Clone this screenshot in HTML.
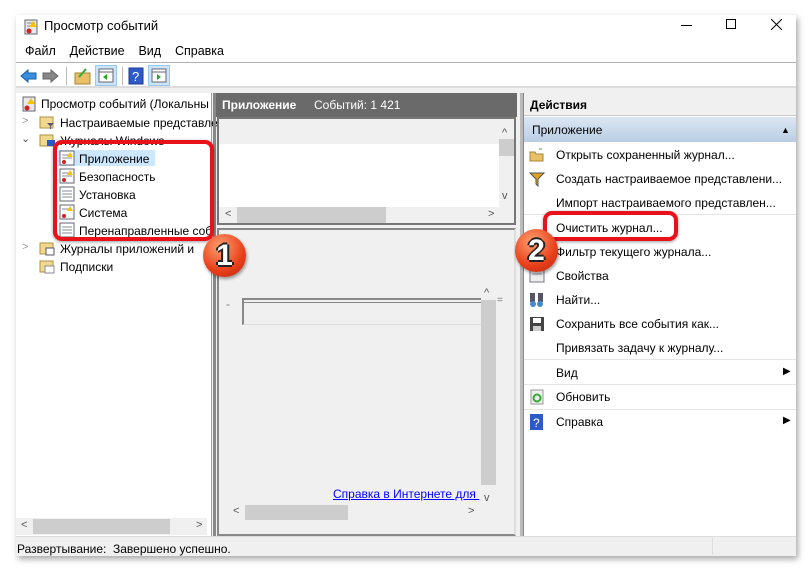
<!DOCTYPE html>
<html><head><meta charset="utf-8">
<style>
*{margin:0;padding:0;box-sizing:border-box}
body{width:812px;height:571px;background:#fff;font-family:"Liberation Sans",sans-serif;font-size:12px;color:#000;position:relative;overflow:hidden}
.a{position:absolute}
.win{left:16px;top:15px;width:780px;height:541px;background:#f0f0f0;box-shadow:2px 3px 6px rgba(0,0,0,.35)}
.t{position:absolute;white-space:nowrap}
.ic{position:absolute;width:16px;height:16px}
.sb{background:#cdcdcd}
.arr{position:absolute;font-size:11px;color:#555}
</style></head><body>
<div class="a win"></div>
<!-- title -->
<div class="a" style="left:16px;top:15px;width:780px;height:47px;background:#fff"></div>
<svg class="a" style="left:23px;top:19px" width="16" height="16"><rect x="2" y="1" width="12" height="14" fill="#e8e8e8" stroke="#667"/><line x1="4" y1="4" x2="12" y2="4" stroke="#889"/><line x1="4" y1="7" x2="12" y2="7" stroke="#889"/><polygon points="10,2 14,8 6,8" fill="#f5c400"/><circle cx="6" cy="12" r="2.5" fill="#d02020"/></svg>
<div class="t" style="left:44px;top:18px;font-size:13px">Просмотр событий</div>
<div class="a" style="left:681px;top:25px;width:11px;height:1px;background:#000"></div>
<div class="a" style="left:726px;top:19px;width:10px;height:10px;border:1px solid #000"></div>
<svg class="a" style="left:771px;top:19px" width="11" height="11"><path d="M0 0L11 11M11 0L0 11" stroke="#000"/></svg>
<div class="t" style="left:25px;top:44px;font-size:12.5px">Файл&nbsp;&nbsp;&nbsp;&nbsp;Действие&nbsp;&nbsp;&nbsp;&nbsp;Вид&nbsp;&nbsp;&nbsp;&nbsp;Справка</div>
<div class="a" style="left:16px;top:62px;width:780px;height:1px;background:#b0b0b0"></div>
<div class="a" style="left:16px;top:63px;width:780px;height:23px;background:#fff"></div>
<div class="a" style="left:16px;top:86px;width:780px;height:2px;background:#ddd"></div>
<!-- toolbar -->
<svg class="a" style="left:20px;top:68px" width="40" height="16"><path d="M1 8L8 2V5H16V11H8V14Z" fill="#3a8ee0" stroke="#1a5fa8"/><path d="M38 8L31 2V5H23V11H31V14Z" fill="#888" stroke="#666"/></svg>
<div class="a" style="left:66px;top:67px;width:1px;height:18px;background:#bbb"></div>
<svg class="a" style="left:74px;top:67px" width="18" height="18"><rect x="1" y="6" width="15" height="11" fill="#e8c068" stroke="#a88430"/><path d="M5 10L12 2" stroke="#3a3" stroke-width="2"/></svg>
<div class="a" style="left:95px;top:65px;width:22px;height:21px;background:#cce4f7;border:1px solid #99c9ef"></div>
<svg class="a" style="left:98px;top:68px" width="16" height="15"><rect x="1" y="1" width="14" height="13" fill="#fff" stroke="#667"/><line x1="1" y1="4" x2="15" y2="4" stroke="#667"/><polygon points="9,6 5,9 9,12" fill="#2a2"/></svg>
<div class="a" style="left:122px;top:67px;width:1px;height:18px;background:#bbb"></div>
<svg class="a" style="left:128px;top:67px" width="16" height="18"><rect x="1" y="1" width="14" height="16" fill="#2e59c8" stroke="#1a3a90"/><text x="4" y="14" font-size="13" fill="#fff" font-family="Liberation Sans">?</text></svg>
<div class="a" style="left:148px;top:65px;width:22px;height:21px;background:#cce4f7;border:1px solid #99c9ef"></div>
<svg class="a" style="left:151px;top:68px" width="16" height="15"><rect x="1" y="1" width="14" height="13" fill="#fff" stroke="#667"/><line x1="1" y1="4" x2="15" y2="4" stroke="#667"/><polygon points="6,6 10,9 6,12" fill="#2a2"/></svg>

<!-- left pane -->
<div class="a" style="left:16px;top:93px;width:196px;height:443px;background:#fff;border-right:1px solid #a0a0a0"></div>
<div class="a" style="left:205px;top:93px;width:4px;height:443px;background:#fff"></div>
<svg class="ic" style="left:21px;top:96px"><rect x="2" y="1" width="12" height="14" fill="#e8e8e8" stroke="#667"/><polygon points="10,2 14,8 6,8" fill="#f5c400"/><circle cx="6" cy="12" r="2.5" fill="#d02020"/></svg>
<div class="t" style="left:41px;top:97px">Просмотр событий (Локальны</div>
<div class="t" style="left:22px;top:115px;color:#999;font-size:11px">&gt;</div>
<svg class="ic" style="left:39px;top:114px"><rect x="1" y="3" width="13" height="11" fill="#f0d890" stroke="#b09040"/><path d="M8 9H15L12 12V15H11V12Z" fill="#557"/></svg>
<div class="t" style="left:60px;top:116px">Настраиваемые представле</div>
<div class="t" style="left:21px;top:132px;color:#555;font-size:11px">⌄</div>
<svg class="ic" style="left:39px;top:132px"><rect x="1" y="3" width="13" height="11" fill="#f0d890" stroke="#b09040"/><rect x="8" y="8" width="8" height="6" fill="#2a5ac8"/></svg>
<div class="t" style="left:60px;top:134px">Журналы Windows</div>
<div class="a" style="left:58px;top:150px;width:97px;height:16px;background:#cce8ff"></div>
<svg class="ic" style="left:59px;top:150px"><rect x="1" y="1" width="14" height="14" fill="#fff" stroke="#667"/><line x1="3" y1="5" x2="13" y2="5" stroke="#889"/><line x1="3" y1="8" x2="13" y2="8" stroke="#889"/><polygon points="11,2 14,7 8,7" fill="#f5c400"/><circle cx="5" cy="12" r="2" fill="#d02020"/></svg>
<div class="t" style="left:79px;top:152px">Приложение</div>
<svg class="ic" style="left:59px;top:168px"><rect x="1" y="1" width="14" height="14" fill="#fff" stroke="#667"/><line x1="3" y1="5" x2="13" y2="5" stroke="#889"/><line x1="3" y1="8" x2="13" y2="8" stroke="#889"/><polygon points="11,2 14,7 8,7" fill="#f5c400"/><circle cx="5" cy="12" r="2" fill="#d02020"/></svg>
<div class="t" style="left:79px;top:170px">Безопасность</div>
<svg class="ic" style="left:59px;top:186px"><rect x="1" y="1" width="14" height="14" fill="#fff" stroke="#667"/><line x1="3" y1="5" x2="13" y2="5" stroke="#889"/><line x1="3" y1="8" x2="13" y2="8" stroke="#889"/><line x1="3" y1="11" x2="13" y2="11" stroke="#889"/></svg>
<div class="t" style="left:79px;top:188px">Установка</div>
<svg class="ic" style="left:59px;top:204px"><rect x="1" y="1" width="14" height="14" fill="#fff" stroke="#667"/><line x1="3" y1="5" x2="13" y2="5" stroke="#889"/><polygon points="11,2 14,7 8,7" fill="#f5c400"/><circle cx="5" cy="12" r="2" fill="#d02020"/></svg>
<div class="t" style="left:79px;top:206px">Система</div>
<svg class="ic" style="left:59px;top:222px"><rect x="1" y="1" width="14" height="14" fill="#fff" stroke="#667"/><line x1="3" y1="5" x2="13" y2="5" stroke="#889"/><line x1="3" y1="8" x2="13" y2="8" stroke="#889"/><line x1="3" y1="11" x2="13" y2="11" stroke="#889"/></svg>
<div class="t" style="left:79px;top:224px">Перенаправленные соб</div>
<div class="t" style="left:22px;top:241px;color:#999;font-size:11px">&gt;</div>
<svg class="ic" style="left:39px;top:240px"><rect x="1" y="3" width="13" height="11" fill="#f0d890" stroke="#b09040"/><rect x="7" y="8" width="8" height="7" fill="#fff" stroke="#556"/></svg>
<div class="t" style="left:60px;top:242px">Журналы приложений и</div>
<svg class="ic" style="left:39px;top:258px"><rect x="1" y="3" width="13" height="11" fill="#f0d890" stroke="#b09040"/><rect x="6" y="8" width="9" height="7" fill="#fff" stroke="#889"/></svg>
<div class="t" style="left:60px;top:260px">Подписки</div>
<!-- left hscroll -->
<div class="a" style="left:16px;top:518px;width:191px;height:17px;background:#f0f0f0"></div>
<div class="a sb" style="left:33px;top:519px;width:137px;height:15px"></div>
<div class="arr" style="left:21px;top:519px">&lt;</div><div class="arr" style="left:196px;top:519px">&gt;</div>

<!-- middle -->
<div class="a" style="left:213px;top:93px;width:3px;height:443px;background:#888"></div>
<div class="a" style="left:216px;top:93px;width:301px;height:24px;background:#6a6a6a"></div>
<div class="t" style="left:222px;top:98px;color:#fff;font-weight:bold">Приложение</div>
<div class="t" style="left:314px;top:98px;color:#fff">Событий: 1 421</div>
<div class="a" style="left:217px;top:117px;width:299px;height:108px;border:2px solid #777;background:#fff"></div>
<div class="a" style="left:219px;top:119px;width:280px;height:25px;background:#f0f0f0"></div>
<div class="a" style="left:499px;top:119px;width:15px;height:88px;background:#f0f0f0"></div>
<div class="a sb" style="left:499px;top:139px;width:15px;height:17px"></div>
<div class="arr" style="left:502px;top:127px">^</div><div class="arr" style="left:502px;top:190px">v</div>
<div class="a" style="left:219px;top:207px;width:295px;height:16px;background:#f0f0f0"></div>
<div class="a sb" style="left:237px;top:207px;width:149px;height:16px"></div>
<div class="arr" style="left:225px;top:208px">&lt;</div><div class="arr" style="left:488px;top:208px">&gt;</div>
<div class="a" style="left:217px;top:228px;width:299px;height:308px;border:2px solid #888;border-right-color:#ddd;background:#f0f0f0"></div>
<div class="t" style="left:226px;top:297px;color:#777">-</div>
<div class="a" style="left:242px;top:298px;width:240px;height:27px;border:2px solid #888;border-right:none;border-bottom:1px solid #ddd"></div>
<div class="a" style="left:244px;top:302px;width:238px;height:1px;background:#888"></div>
<div class="a" style="left:481px;top:283px;width:15px;height:222px;background:#f0f0f0"></div>
<div class="a sb" style="left:481px;top:300px;width:15px;height:185px"></div>
<div class="arr" style="left:484px;top:287px">^</div><div class="arr" style="left:484px;top:492px">v</div>
<div class="t" style="left:497px;top:295px;color:#777;font-size:10px">=</div>
<div class="t" style="left:333px;top:487px;color:#00f;text-decoration:underline">Справка в Интернете для&nbsp;</div>
<div class="a" style="left:228px;top:505px;width:253px;height:16px;background:#f0f0f0"></div>
<div class="a sb" style="left:245px;top:505px;width:103px;height:15px"></div>
<div class="arr" style="left:233px;top:505px">&lt;</div><div class="arr" style="left:468px;top:505px">&gt;</div>

<!-- right -->
<div class="a" style="left:520px;top:93px;width:3px;height:443px;background:#bbb"></div>
<div class="a" style="left:523px;top:93px;width:273px;height:443px;background:#fff;border-left:1px solid #888"></div>
<div class="a" style="left:524px;top:93px;width:272px;height:23px;background:#f0f0f0;border-bottom:1px solid #ccc"></div>
<div class="t" style="left:530px;top:98px;font-weight:bold">Действия</div>
<div class="a" style="left:524px;top:117px;width:272px;height:25px;background:linear-gradient(#dce7f3,#b9cde4)"></div>
<div class="t" style="left:532px;top:123px">Приложение</div>
<div class="t" style="left:781px;top:125px;font-size:9px">▲</div>
<svg class="ic" style="left:529px;top:147px"><path d="M1 5H6L7 7H14V14H1Z" fill="#e8c068" stroke="#a88430"/><line x1="10" y1="2" x2="13" y2="2" stroke="#3a3"/></svg>
<div class="t" style="left:556px;top:148px">Открыть сохраненный журнал...</div>
<svg class="ic" style="left:529px;top:171px"><path d="M1 2H15L9 8V15L7 13V8Z" fill="#e0a020" stroke="#555"/></svg>
<div class="t" style="left:556px;top:172px">Создать настраиваемое представлени...</div>
<div class="t" style="left:556px;top:196px">Импорт настраиваемого представлен...</div>
<div class="a" style="left:524px;top:214px;width:272px;height:1px;background:#e5e5e5"></div>
<div class="t" style="left:556px;top:221px">Очистить журнал...</div>
<div class="t" style="left:556px;top:245px">Фильтр текущего журнала...</div>
<svg class="ic" style="left:529px;top:268px"><rect x="1" y="2" width="14" height="12" fill="#eee" stroke="#778"/><line x1="3" y1="6" x2="13" y2="6" stroke="#99a"/></svg>
<div class="t" style="left:556px;top:269px">Свойства</div>
<svg class="ic" style="left:529px;top:292px"><rect x="1" y="1" width="5" height="9" fill="#556"/><rect x="9" y="1" width="5" height="9" fill="#556"/><circle cx="4" cy="12" r="3" fill="#48c"/><circle cx="11" cy="12" r="3" fill="#48c"/></svg>
<div class="t" style="left:556px;top:293px">Найти...</div>
<svg class="ic" style="left:529px;top:316px"><rect x="1" y="1" width="14" height="14" fill="#444"/><rect x="4" y="2" width="8" height="5" fill="#fff"/><rect x="4" y="10" width="8" height="5" fill="#ccc"/></svg>
<div class="t" style="left:556px;top:317px">Сохранить все события как...</div>
<div class="t" style="left:556px;top:341px">Привязать задачу к журналу...</div>
<div class="a" style="left:524px;top:359px;width:272px;height:1px;background:#e5e5e5"></div>
<div class="t" style="left:556px;top:366px">Вид</div>
<div class="t" style="left:783px;top:366px;font-size:10px">▶</div>
<div class="a" style="left:524px;top:384px;width:272px;height:1px;background:#e5e5e5"></div>
<svg class="ic" style="left:529px;top:389px"><rect x="2" y="1" width="12" height="14" fill="#eee" stroke="#999"/><circle cx="8" cy="9" r="3.5" fill="none" stroke="#3a3" stroke-width="2"/></svg>
<div class="t" style="left:556px;top:390px">Обновить</div>
<div class="a" style="left:524px;top:409px;width:272px;height:1px;background:#e5e5e5"></div>
<svg class="ic" style="left:529px;top:414px"><rect x="1" y="0" width="13" height="16" fill="#2e59c8"/><text x="4" y="13" font-size="12" fill="#fff" font-family="Liberation Sans">?</text></svg>
<div class="t" style="left:556px;top:415px">Справка</div>
<div class="t" style="left:783px;top:415px;font-size:10px">▶</div>

<!-- status -->
<div class="a" style="left:16px;top:536px;width:780px;height:1px;background:#ddd"></div>
<div class="a" style="left:712px;top:538px;width:1px;height:17px;background:#ddd"></div>
<div class="t" style="left:17px;top:542px">Развертывание:&nbsp; Завершено успешно.</div>

<!-- annotations -->
<div class="a" style="left:53px;top:140px;width:161px;height:101px;border:4px solid #e8121a;border-radius:9px;box-shadow:0 1px 3px rgba(0,0,0,.4)"></div>
<div class="a" style="left:543px;top:211px;width:135px;height:30px;border:4px solid #e8121a;border-radius:9px;box-shadow:0 1px 3px rgba(0,0,0,.4)"></div>
<div class="a" style="left:203px;top:234px;width:43px;height:43px;border-radius:50%;background:radial-gradient(circle at 40% 30%,#ffa070,#e8401a 60%,#b82010);box-shadow:1px 2px 3px rgba(0,0,0,.4);color:#fff;font:bold 30px/43px 'Liberation Sans',sans-serif;text-align:center;text-shadow:-2px 0 #222,2px 0 #222,0 -2px #222,0 2px #222">1</div>
<div class="a" style="left:515px;top:229px;width:43px;height:43px;border-radius:50%;background:radial-gradient(circle at 40% 30%,#ffa070,#e8401a 60%,#b82010);box-shadow:1px 2px 3px rgba(0,0,0,.4);color:#fff;font:bold 30px/43px 'Liberation Sans',sans-serif;text-align:center;text-shadow:-2px 0 #222,2px 0 #222,0 -2px #222,0 2px #222">2</div>
</body></html>
